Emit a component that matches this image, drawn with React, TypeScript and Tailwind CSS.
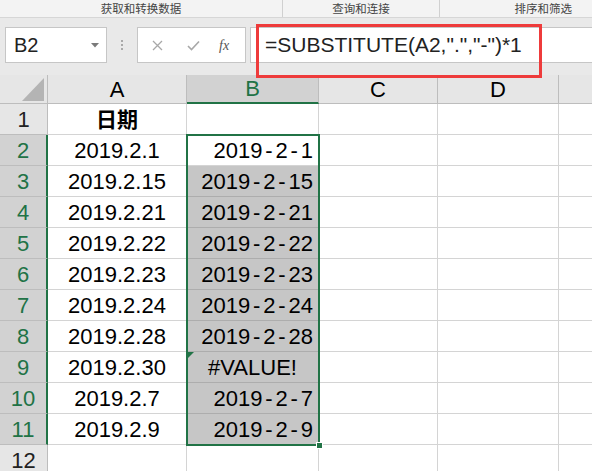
import React from "react";

const colA = ["2019.2.1","2019.2.15","2019.2.21","2019.2.22","2019.2.23","2019.2.24","2019.2.28","2019.2.30","2019.2.7","2019.2.9"];
const colB = ["2019-2-1","2019-2-15","2019-2-21","2019-2-22","2019-2-23","2019-2-24","2019-2-28","#VALUE!","2019-2-7","2019-2-9"];

function Dashed({ text }: { text: string }) {
  const parts = text.split("-");
  return (
    <span className="whitespace-nowrap">
      {parts.map((p, i) => (
        <React.Fragment key={i}>
          {i > 0 && <span className="inline-block w-[13px] text-center">-</span>}
          {p}
        </React.Fragment>
      ))}
    </span>
  );
}

export default function App() {
  const rows = Array.from({ length: 12 }, (_, i) => i + 1);
  return (
    <div className="relative w-[592px] h-[471px] overflow-hidden bg-white font-['Liberation_Sans',sans-serif] text-black">
      {/* ribbon group labels */}
      <div className="h-[18px] flex items-center bg-[#f3f3f3] border-b border-[#d6d6d6] text-[11.5px] leading-[17px] text-[#444] font-['Noto_Sans_CJK_SC',sans-serif]">
        <div className="w-[283px] h-full shrink-0 flex justify-center border-r border-[#d0d0d0]">获取和转换数据</div>
        <div className="w-[157px] h-full shrink-0 flex justify-center border-r border-[#d0d0d0]">查询和连接</div>
        <div className="w-[152px] h-full shrink-0 flex justify-end pr-[20px]">排序和筛选</div>
      </div>

      {/* formula bar */}
      <div className="relative h-[57px] bg-[#e9e9e9] flex items-start pt-[9px]">
        <div className="ml-[5px] w-[102px] h-[36px] bg-white border border-[#c6c6c6] flex items-center justify-between pl-[8px] pr-[7px]">
          <span className="text-[20px] text-[#222]">B2</span>
          <svg width="8" height="5" viewBox="0 0 8 5"><polygon points="0,0 8,0 4,4.5" fill="#7a7a7a" /></svg>
        </div>
        <div className="w-[30px] h-[36px] flex flex-col items-center justify-center gap-[2px]">
          <div className="w-[2px] h-[2px] bg-[#a9a9a9]" />
          <div className="w-[2px] h-[2px] bg-[#a9a9a9]" />
          <div className="w-[2px] h-[2px] bg-[#a9a9a9]" />
        </div>
        <div className="w-[109px] h-[36px] bg-white border border-[#c6c6c6] flex items-center">
          <svg className="ml-[14px]" width="11" height="11" viewBox="0 0 11 11">
            <path d="M1 1 L10 10 M10 1 L1 10" stroke="#a8a8a8" strokeWidth="1.3" />
          </svg>
          <svg className="ml-[24px]" width="13" height="11" viewBox="0 0 13 11">
            <path d="M1 6 L4.5 9.5 L12 1.5" stroke="#a8a8a8" strokeWidth="1.6" fill="none" />
          </svg>
          <span className="ml-[19px] text-[14px] italic text-[#555] font-['Liberation_Serif',serif]">fx</span>
        </div>
        <div className="ml-[4px] flex-1 h-[36px] bg-white border-y border-l border-[#c6c6c6] flex items-center pl-[14px]">
          <span className="text-[21px] text-[#222] whitespace-nowrap">=SUBSTITUTE(A2,".","-")*1</span>
        </div>
      </div>

      {/* grid */}
      <div className="relative grid grid-cols-[48px_139px_132px_119px_121px_1fr]">
        {/* header row */}
        <div className="relative h-[29px] bg-[#e6e6e6] border-r border-b border-[#bdbdbd]">
          <svg className="absolute right-[3px] bottom-[2px]" width="22" height="23" viewBox="0 0 22 23">
            <polygon points="22,0 22,23 0,23" fill="#b4b4b4" />
          </svg>
        </div>
        <div className="h-[29px] bg-[#e6e6e6] border-r border-b border-[#bdbdbd] flex items-center justify-center text-[22px]">A</div>
        <div className="h-[29px] bg-[#d2d2d2] border-r border-[#bdbdbd] border-b-2 border-b-[#217346] flex items-center justify-center text-[22px] text-[#217346]">B</div>
        <div className="h-[29px] bg-[#e6e6e6] border-r border-b border-[#bdbdbd] flex items-center justify-center text-[22px]">C</div>
        <div className="h-[29px] bg-[#e6e6e6] border-r border-b border-[#bdbdbd] flex items-center justify-center text-[22px]">D</div>
        <div className="h-[29px] bg-[#e6e6e6] border-b border-[#bdbdbd]" />

        {rows.map((r) => {
          const sel = r >= 2 && r <= 11;
          const a = sel ? colA[r - 2] : r === 1 ? "日期" : "";
          const b = sel ? colB[r - 2] : "";
          return (
            <React.Fragment key={r}>
              <div
                className={
                  sel
                    ? "h-[31px] bg-[#d2d2d2] border-b border-[#bdbdbd] border-r-2 border-r-[#217346] flex items-center justify-center text-[22px] text-[#217346]"
                    : "h-[31px] bg-[#e6e6e6] border-b border-r border-[#bdbdbd] flex items-center justify-center text-[22px] text-[#222]"
                }
              >
                {r}
              </div>
              <div
                className={
                  r === 1
                    ? "h-[31px] border-r border-b border-[#d4d4d4] flex items-center justify-center text-[21px] font-bold font-['Noto_Sans_CJK_SC',sans-serif]"
                    : "h-[31px] border-r border-b border-[#d4d4d4] flex items-center justify-center text-[22px]"
                }
              >
                {a}
              </div>
              <div
                className={
                  "relative h-[31px] border-r border-b flex items-center text-[22px] " +
                  (r >= 3 && r <= 11 ? "bg-[#c6c6c6] border-[#adadad] " : "border-[#d4d4d4] ") +
                  (r === 9 ? "justify-center" : "justify-end pr-[5px]")
                }
              >
                {r === 9 && (
                  <svg className="absolute left-[1px] top-0" width="6" height="6" viewBox="0 0 6 6">
                    <polygon points="0,0 6,0 0,6" fill="#217346" />
                  </svg>
                )}
                {r === 9 ? b : <Dashed text={b} />}
              </div>
              <div className="h-[31px] border-r border-b border-[#d4d4d4]" />
              <div className="h-[31px] border-r border-b border-[#d4d4d4]" />
              <div className="h-[31px] border-b border-[#d4d4d4]" />
            </React.Fragment>
          );
        })}

        {/* selection border */}
        <div className="absolute left-[186px] top-[59px] w-[134px] h-[312px] border-2 border-[#217346] pointer-events-none" />
        <div className="absolute left-[316px] top-[367px] w-[7px] h-[7px] bg-[#217346] border border-white" />
      </div>

      {/* red highlight rectangle */}
      <div className="absolute left-[256px] top-[24px] w-[286px] h-[54px] border-[3px] border-[#ee3b3b]" />
    </div>
  );
}
